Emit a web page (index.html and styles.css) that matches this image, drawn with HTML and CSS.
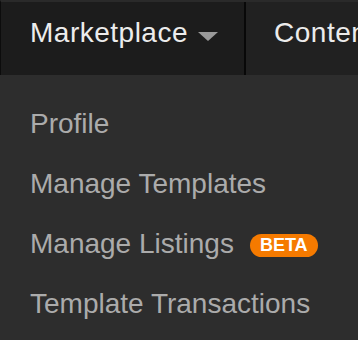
FILE: index.html
```html
<!DOCTYPE html>
<html lang="en">
<head>
  <meta charset="UTF-8">
  <meta name="viewport" content="width=device-width, initial-scale=1.0">
  <title>Marketplace Menu</title>
  <link rel="stylesheet" href="styles.css">
</head>
<body>
  <nav class="topbar">
    <div class="tab tab-open">
      <span class="tab-label">Marketplace</span>
      <span class="caret"></span>
    </div>
    <div class="tab tab-next">
      <span class="tab-label">Content</span>
    </div>
  </nav>
  <ul class="dropdown">
    <li class="item">Profile</li>
    <li class="item">Manage Templates</li>
    <li class="item">Manage Listings <span class="badge">BETA</span></li>
    <li class="item">Template Transactions</li>
  </ul>
</body>
</html>
```

FILE: styles.css
```css
body {
  margin: 0;
  background-color: #2d2d2d;
  font-family: "Liberation Sans", Arial, sans-serif;
  overflow: hidden;
}

.topbar {
  display: flex;
  height: 73px;
  border-top: 2px solid #2a2a2a;
  border-left: 1px solid #0c0c0c;
  background-color: #1c1c1c;
  white-space: nowrap;
}

.tab {
  display: flex;
  align-items: flex-start;
  padding: 16px 26px 0 29px;
  line-height: 30px;
  font-size: 28px;
  letter-spacing: 0.5px;
  color: #ececec;
}

.tab-open {
  border-right: 2px solid #080808;
}

.tab-next {
  flex: 1;
  background-color: #212121;
  padding-left: 28px;
}

.caret {
  width: 0;
  height: 0;
  margin: 14px 0 0 10px;
  border-left: 10px solid transparent;
  border-right: 10px solid transparent;
  border-top: 9px solid #999;
}

.dropdown {
  list-style: none;
  margin: 0;
  padding: 19px 0 0 30px;
}

.item {
  display: flex;
  align-items: center;
  height: 60px;
  font-size: 28px;
  color: #ababab;
  white-space: nowrap;
}

.badge {
  margin-left: 16px;
  margin-top: 2px;
  padding: 0 10px;
  height: 23px;
  line-height: 23px;
  border-radius: 12px;
  background-color: #f57a00;
  color: #fff;
  font-size: 18px;
  font-weight: bold;
}
```
